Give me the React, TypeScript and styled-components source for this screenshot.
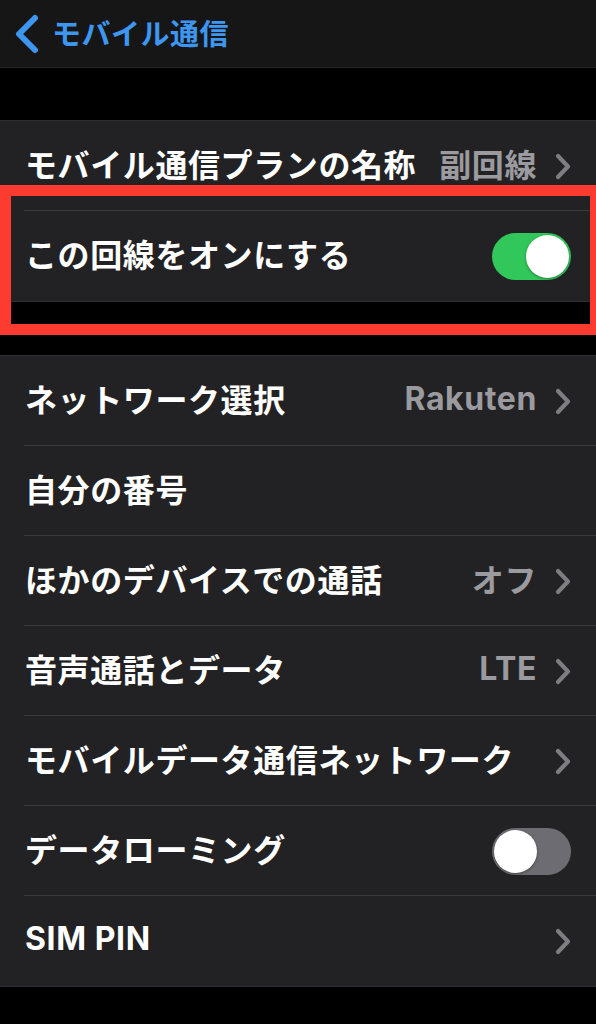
import * as React from 'react';
import styled, { createGlobalStyle } from 'styled-components';

const GlobalStyle = createGlobalStyle`
    html, body {
        margin: 0;
        padding: 0;
        background: #000;
    }
    body {
        font-family: "Inter", "Noto Sans CJK JP", sans-serif;
        -webkit-font-smoothing: antialiased;
    }
`;

const Screen = styled.div`
    position: relative;
    width: 596px;
    height: 1024px;
    background: #000;
    overflow: hidden;
`;

const NavBar = styled.header`
    display: flex;
    align-items: center;
    gap: 12px;
    height: 67px;
    padding-left: 14px;
    background: #161617;
    border-bottom: 1px solid #262628;
    box-sizing: content-box;
`;

const BackTitle = styled.span`
    font-family: "Noto Sans CJK JP", sans-serif;
    font-size: 29px;
    font-weight: 700;
    color: #3d97f1;
    letter-spacing: 0.5px;
    margin-top: -4px;
`;

const Group = styled.section<{ $top: number }>`
    margin-top: ${p => p.$top}px;
    background: #222224;
    border-top: 1px solid #2f2f31;
    border-bottom: 1px solid #2f2f31;
`;

const Row = styled.div<{ $last?: boolean }>`
    position: relative;
    display: flex;
    align-items: center;
    height: 90px;
    padding: 0 25px 6px 25px;
    box-sizing: border-box;

    &::after {
        content: '';
        display: ${p => (p.$last ? 'none' : 'block')};
        position: absolute;
        left: 24px;
        right: 0;
        bottom: 0;
        height: 1px;
        background: #3a3a3c;
    }
`;

const Label = styled.span`
    flex: 1;
    font-size: 32px;
    font-weight: 700;
    color: #fff;
    white-space: nowrap;
    letter-spacing: 0.6px;
`;

const Value = styled.span`
    font-size: 32px;
    font-weight: 700;
    color: #9a9a9f;
    margin-right: 18px;
    white-space: nowrap;
    letter-spacing: 0.6px;
`;

const Accessory = styled.div`
    display: flex;
    align-items: center;
    margin-top: 6px;
`;

const Track = styled.div<{ $on: boolean }>`
    position: relative;
    width: 79px;
    height: 47px;
    border-radius: 24px;
    background: ${p => (p.$on ? '#32c75a' : '#6c6c72')};
    flex-shrink: 0;
`;

const Knob = styled.div<{ $on: boolean }>`
    position: absolute;
    top: 2px;
    left: ${p => (p.$on ? '34px' : '2px')};
    width: 43px;
    height: 43px;
    border-radius: 50%;
    background: #fff;
    box-shadow: 0 1px 3px rgba(0, 0, 0, 0.35);
`;

const Highlight = styled.div`
    position: absolute;
    left: 0;
    top: 185px;
    width: 596px;
    height: 150px;
    border: 11px solid #fd3b30;
    border-right-width: 6px;
    box-sizing: border-box;
    pointer-events: none;
`;

const Chevron = () => (
    <svg width="16" height="27" viewBox="0 0 16 27">
        <path d="M3 3 L13 13.5 L3 24" fill="none" stroke="#7d7d82" strokeWidth="4.2" strokeLinecap="round" strokeLinejoin="round" />
    </svg>
);

const BackChevron = () => (
    <svg width="26" height="40" viewBox="0 0 26 40">
        <path d="M21 4 L5 20 L21 36" fill="none" stroke="#3d97f1" strokeWidth="6" strokeLinecap="round" strokeLinejoin="round" />
    </svg>
);

const Toggle: React.FC<{ on: boolean }> = ({ on }) => (
    <Track $on={on}>
        <Knob $on={on} />
    </Track>
);

type Item = { label: string; value?: string; chevron?: boolean; toggle?: boolean };

const networkItems: Item[] = [
    { label: 'ネットワーク選択', value: 'Rakuten', chevron: true },
    { label: '自分の番号' },
    { label: 'ほかのデバイスでの通話', value: 'オフ', chevron: true },
    { label: '音声通話とデータ', value: 'LTE', chevron: true },
    { label: 'モバイルデータ通信ネットワーク', chevron: true },
    { label: 'データローミング', toggle: false },
    { label: 'SIM PIN', chevron: true },
];

const SettingRow: React.FC<{ item: Item; last?: boolean }> = ({ item, last }) => (
    <Row $last={last}>
        <Label>{item.label}</Label>
        {item.value && <Value>{item.value}</Value>}
        {(item.chevron || item.toggle !== undefined) && (
            <Accessory>
                {item.chevron && <Chevron />}
                {item.toggle !== undefined && <Toggle on={item.toggle} />}
            </Accessory>
        )}
    </Row>
);

const App: React.FC = () => {
    return (
        <Screen>
            <GlobalStyle />
            <NavBar>
                <BackChevron />
                <BackTitle>モバイル通信</BackTitle>
            </NavBar>

            <Group $top={52}>
                <SettingRow item={{ label: 'モバイル通信プランの名称', value: '副回線', chevron: true }} />
                <SettingRow item={{ label: 'この回線をオンにする', toggle: true }} last />
            </Group>

            <Group $top={53}>
                {networkItems.map((item, i) => (
                    <SettingRow key={item.label} item={item} last={i === networkItems.length - 1} />
                ))}
            </Group>

            <Highlight />
        </Screen>
    );
};

export default App;
